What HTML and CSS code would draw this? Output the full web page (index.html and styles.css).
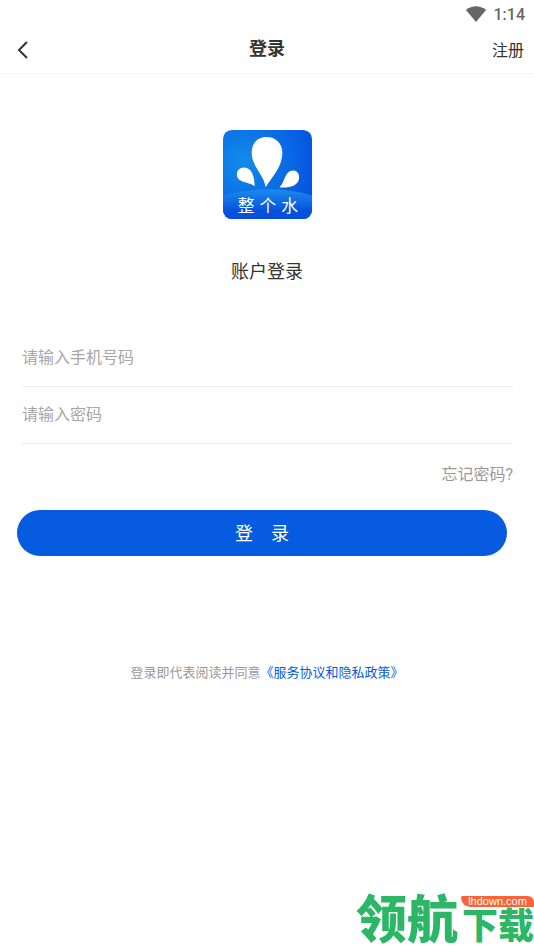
FILE: index.html
```html
<!DOCTYPE html>
<html lang="zh-CN">
<head>
<meta charset="utf-8">
<meta name="viewport" content="width=device-width, initial-scale=1">
<title>登录</title>
<link rel="stylesheet" href="styles.css">
</head>
<body>
<div class="status">
  <svg class="wifi" viewBox="0 0 20 16" aria-hidden="true"><path d="M0 4C6-1 14-1 20 4L10 16Z"/></svg>
  <span>1:14</span>
</div>
<header class="bar">
  <button class="back" type="button" aria-label="返回">
    <svg viewBox="0 0 12 20" aria-hidden="true"><path d="M10 2 2 10l8 8"/></svg>
  </button>
  <h1 class="title">登录</h1>
  <a class="register" href="#">注册</a>
</header>
<main>
  <svg class="logo" viewBox="0 0 90 90" role="img" aria-label="整个水">
    <defs>
      <radialGradient id="sky" cx=".22" cy=".35" r=".85"><stop offset="0" stop-color="#128ceb"/><stop offset="1" stop-color="#0552df"/></radialGradient>
      <linearGradient id="sea" x1="0" y1="0" x2="0" y2="1"><stop offset="0" stop-color="#1b8bed"/><stop offset=".75" stop-color="#0650dc"/></linearGradient>
      <clipPath id="tile"><rect width="90" height="90" rx="9"/></clipPath>
    </defs>
    <g clip-path="url(#tile)">
      <rect width="90" height="90" fill="url(#sky)"/>
      <path d="M0 66Q45 54 90 66V90H0Z" fill="url(#sea)"/>
      <path class="drop" d="M43 58C42 46 29 37 29 23C29 13 35 7 44 7C53 7 60 13 60 23C60 37 50 47 43 58Z"/>
      <path class="drop" d="M32 57C27 52 14 54 14 45C14 41 17 38 21 38C29 38 32 47 32 57Z"/>
      <path class="drop" d="M57 58C63 53 62 41 71 41C75 41 77 44 77 48C77 57 65 59 57 58Z"/>
      <path class="glint" d="M55 14Q59 20 58 30"/>
      <text class="logo-text" x="15 37 59" y="83">整个水</text>
    </g>
  </svg>
  <h2 class="subtitle">账户登录</h2>
  <form class="form">
    <input class="field" type="tel" aria-label="手机号码" placeholder="请输入手机号码">
    <input class="field" type="password" aria-label="密码" placeholder="请输入密码">
    <a class="forgot" href="#">忘记密码?</a>
    <button class="submit" type="button"><span>登</span><span>录</span></button>
  </form>
  <p class="terms">登录即代表阅读并同意<a href="#">《服务协议和隐私政策》</a></p>
</main>
<aside class="mark">
  <span class="mark-big">领航</span>
  <div class="mark-side">
    <span class="mark-site">lhdown.com</span>
    <span class="mark-small">下载</span>
  </div>
</aside>
</body>
</html>
```
FILE: styles.css
```css
* { box-sizing: border-box; }
body {
  margin: 0;
  min-height: 100vh;
  position: relative;
  background: #fff;
  color: #333;
  font-family: Roboto, "Noto Sans CJK SC", sans-serif;
  font-size: 16px;
}
a { color: inherit; text-decoration: none; }
button { border: 0; padding: 0; background: none; font: inherit; color: inherit; }
.status {
  height: 26px;
  padding: 2px 9px 0;
  display: flex;
  align-items: center;
  justify-content: flex-end;
  gap: 8px;
  color: #666;
  font-weight: 500;
}
.wifi { width: 20px; height: 16px; fill: #666; }
.bar {
  height: 48px;
  padding: 0 10px 2px;
  display: grid;
  grid-template-columns: 1fr auto 1fr;
  align-items: center;
  border-bottom: 1px solid #f2f2f2;
}
.back { width: 26px; height: 24px; padding: 3px 7px 0; }
.back svg { display: block; width: 12px; height: 20px; fill: none; stroke: #333; stroke-width: 2; }
.title { margin: 0; font-size: 18px; line-height: 28px; font-weight: 700; }
.register { justify-self: end; }
.logo { display: block; width: 89px; height: 89px; margin: 56px auto 0; }
.drop { fill: #fff; }
.glint { fill: none; stroke: #e3f0fd; stroke-width: 1; }
.logo-text { fill: #fff; font-size: 17px; font-weight: 400; }
.subtitle { margin: 39px 0 0; font-size: 18px; line-height: 28px; font-weight: 400; text-align: center; }
.form { margin-top: 44px; padding: 0 21px 0 22px; display: flex; flex-direction: column; }
.field {
  width: 100%;
  height: 57px;
  padding: 0 0 2px;
  border: 0;
  border-bottom: 1px solid #ececec;
  background: none;
  color: #333;
  font: inherit;
  outline: 0;
}
.field::placeholder { color: #a6a6a6; opacity: 1; }
.forgot { align-self: flex-end; margin-top: 19px; line-height: 24px; color: #999; }
.submit {
  height: 46px;
  margin: 23px 6px 0 -5px;
  padding-bottom: 2px;
  border-radius: 23px;
  background: #065be0;
  color: #fff;
  font-size: 18px;
  display: flex;
  align-items: center;
  justify-content: center;
  gap: 18px;
}
.terms { margin: 107px 0 0; font-size: 13px; line-height: 20px; color: #999; text-align: center; }
.terms a { color: #065be0; }
.mark {
  position: absolute;
  right: 0;
  bottom: 0;
  display: flex;
  align-items: flex-start;
  gap: 3px;
  color: #2bb765;
  font-family: "Noto Sans CJK SC", sans-serif;
  font-weight: 900;
}
.mark-big { padding-bottom: 5px; font-size: 51px; line-height: 56px; }
.mark-side { padding-top: 8px; display: flex; flex-direction: column; align-items: flex-end; }
.mark-site {
  width: 73px;
  border-radius: 2px 8px 2px 12px;
  background: #fb6238;
  color: #fff;
  font: 11px/11px "Liberation Sans", sans-serif;
  text-align: center;
}
.mark-small { font-size: 36px; line-height: 32px; }
```
